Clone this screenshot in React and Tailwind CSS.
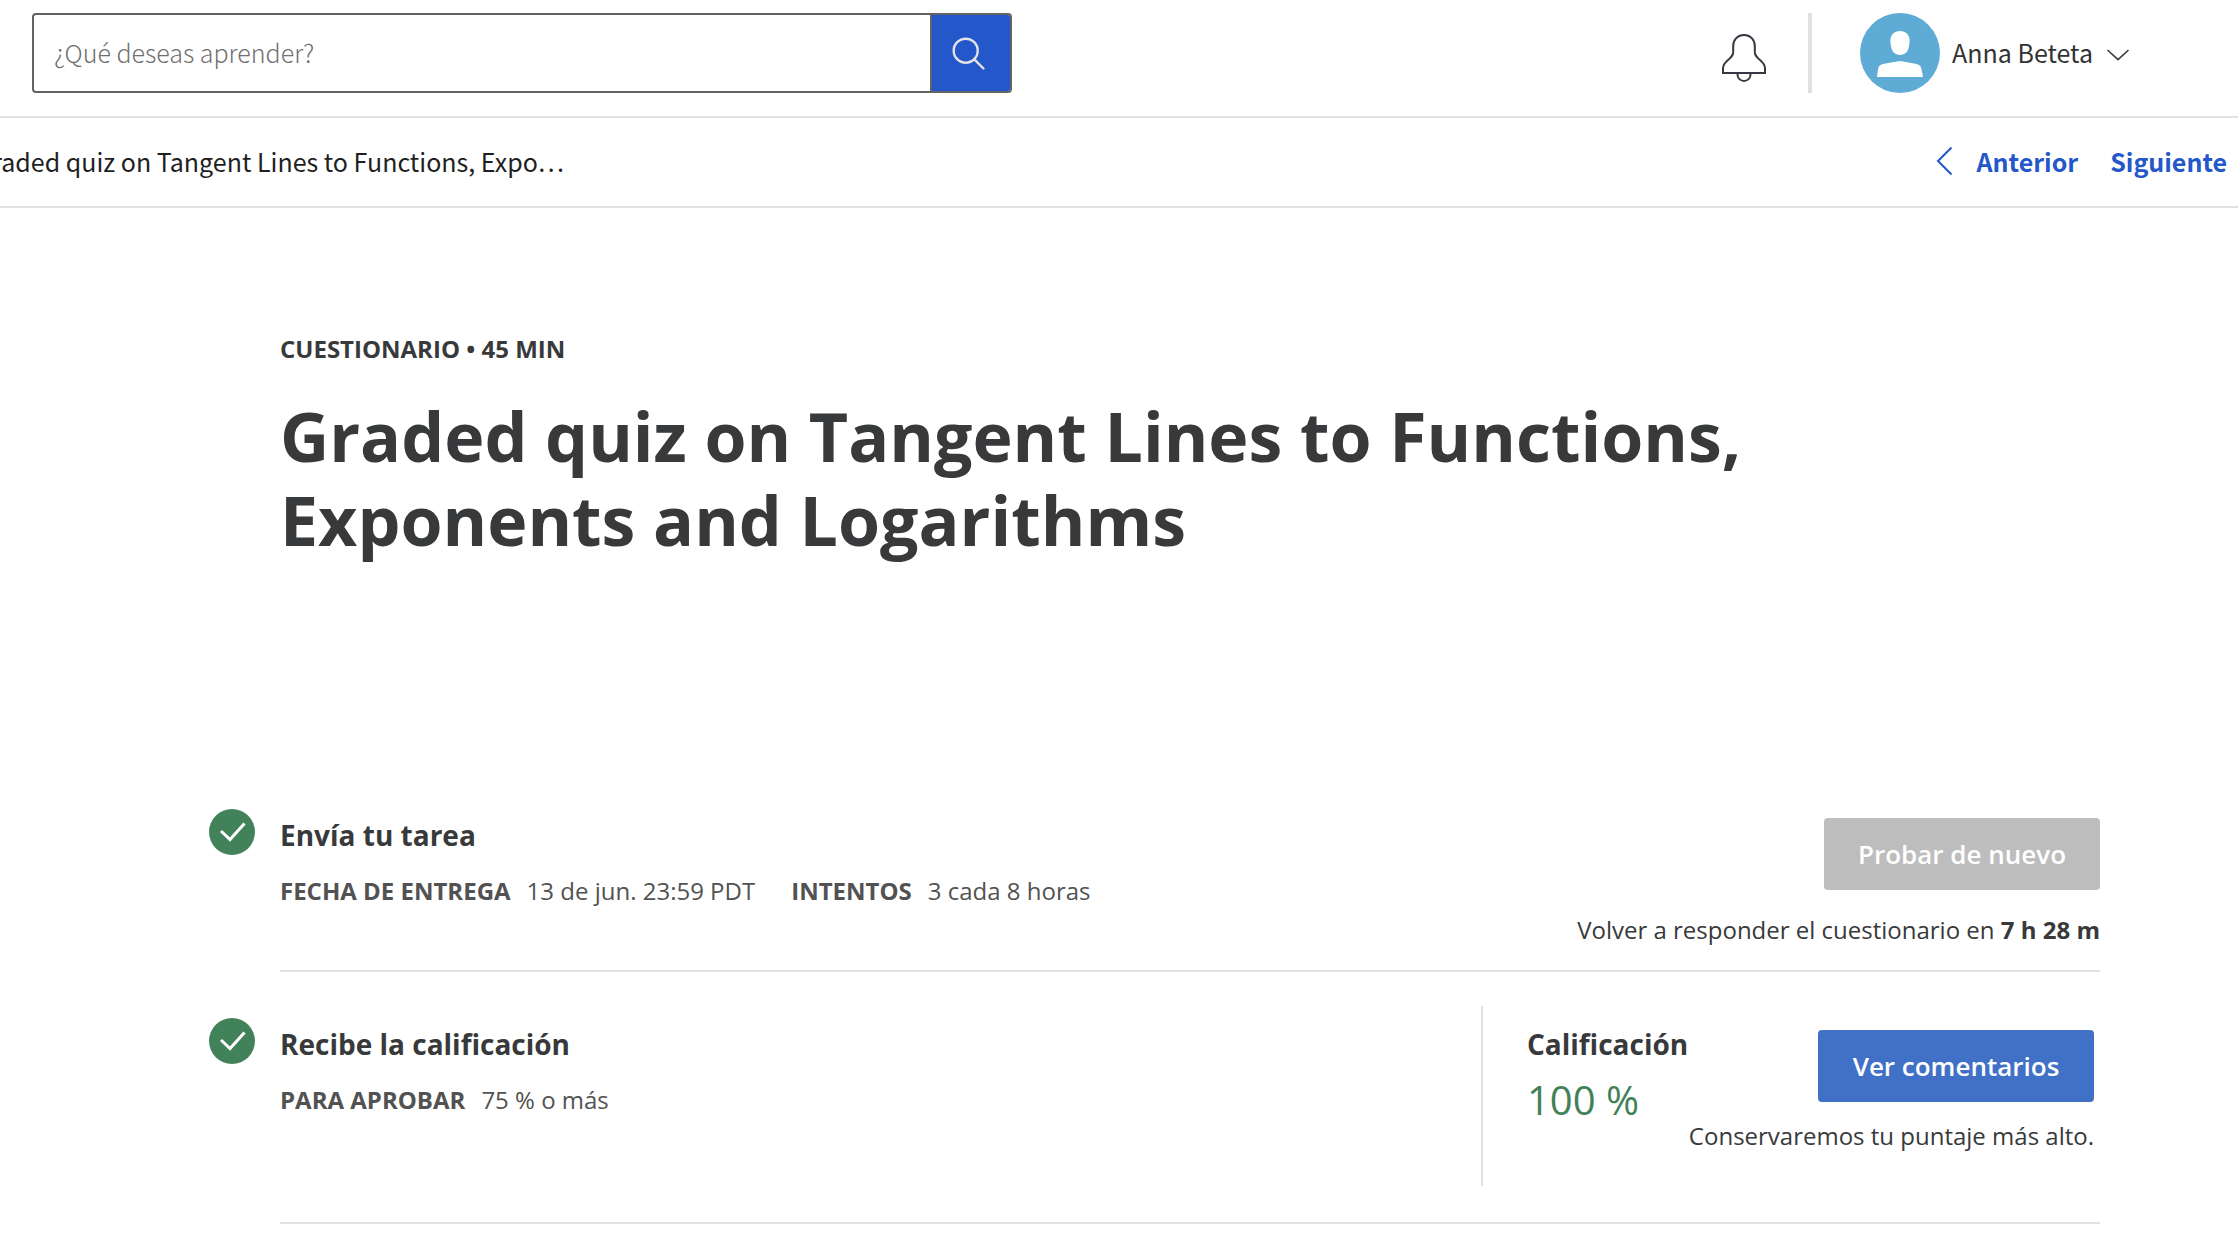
function SearchIcon() {
  return (
    <svg className="size-9" viewBox="0 0 36 36" fill="none" stroke="#e4e4e6" strokeWidth="2.4" strokeLinecap="round">
      <circle cx="14.7" cy="14.7" r="12" />
      <path d="M23.3 23.3L32.5 32.5" />
    </svg>
  );
}

function BellIcon() {
  return (
    <svg className="h-12 w-11" viewBox="0 0 44 48" fill="none" stroke="#373a44" strokeWidth="2">
      <path d="M1 39v-4.500c0-3.200 1.400-5.400 4-7.600 3.900-3.300 6.200-5.100 6.200-9V12C11.200 5.600 15.600 1 22 1s10.800 4.600 10.800 11v5.900c0 3.900 2.300 5.700 6.200 9 2.600 2.200 4 4.400 4 7.600V39Z" />
      <path d="M15.500 39v1.500c0 3.700 2.900 6.500 6.500 6.500s6.500-2.800 6.500-6.500V39" />
    </svg>
  );
}

function Avatar() {
  return (
    <svg className="size-20" viewBox="0 0 80 80">
      <circle cx="40" cy="40" r="40" fill="#5eacd6" />
      <path d="M40 18c5.500 0 9.600 3.700 9.600 9.300 0 2.500-.5 5.700-1.300 8.800C47.200 39.700 44 42 40 42s-7.200-2.300-8.300-5.900c-.8-3.100-1.300-6.300-1.300-8.800 0-5.600 4.100-9.300 9.600-9.300Z" fill="#fff" />
      <path d="M40 48c6 1.200 11.500 1.900 16.500 3 3 .7 4.600 2.300 5 5.200L63 64H17l1-7.800c.4-2.900 2-4.500 5-5.200 5-1.100 11-1.800 17-3Z" fill="#fff" />
    </svg>
  );
}

function CheckBadge() {
  return (
    <svg className="mt-3 size-[46px] shrink-0" viewBox="0 0 46 46">
      <circle cx="23" cy="23" r="23" fill="#42825a" />
      <path d="M12 22l9 8.500L35.500 14.500" fill="none" stroke="#fff" strokeWidth="3" />
    </svg>
  );
}

function Detail({ label, value }) {
  return (
    <div className="flex gap-4">
      <dt className="font-bold">{label}</dt>
      <dd>{value}</dd>
    </div>
  );
}

function Step({ title, details, children }) {
  return (
    <li className="flex gap-[25px]">
      <CheckBadge />
      <div className="flex min-w-0 flex-1 justify-between border-b-2 border-[#e1e1e1]">
        <div className="pt-5">
          <h2 className="text-[28px] leading-9 font-bold">{title}</h2>
          <dl className="mt-5 flex gap-9 text-2xl leading-9 text-[#525252]">
            {details.map((d) => (
              <Detail key={d.label} {...d} />
            ))}
          </dl>
        </div>
        {children}
      </div>
    </li>
  );
}

function Header() {
  return (
    <header className="flex items-center justify-between border-b-2 border-[#e1e1e1] pt-[13px] pr-[108px] pb-[23px] pl-8">
      <form className="flex h-20 w-[980px] overflow-hidden rounded-sm border-2 border-[#636363]" onSubmit={(e) => e.preventDefault()}>
        <input
          type="text"
          aria-label="Buscar"
          placeholder="¿Qué deseas aprender?"
          className="min-w-0 flex-1 px-5 pb-0.5 font-light outline-none placeholder:text-[#6f6f6f]"
        />
        <button type="submit" aria-label="Buscar cursos" className="flex w-20 items-center justify-center border-l-2 border-[#636363] bg-[#2457c9] pt-0.5 pr-1">
          <SearchIcon />
        </button>
      </form>
      <div className="flex items-center">
        <button type="button" aria-label="Notificaciones" className="mr-[42px] pt-2.5">
          <BellIcon />
        </button>
        <div className="mr-12 h-20 w-1 bg-[#e1e1e1]" />
        <button type="button" className="flex items-center text-[#333]">
          <Avatar />
          <span className="ml-3 pb-0.5">Anna Beteta</span>
          <svg className="mt-1 ml-[13px] h-3 w-6" viewBox="0 0 24 12" fill="none" stroke="#373a44" strokeWidth="1.600">
            <path d="M1.500 1L12 10.700L22.500 1" />
          </svg>
        </button>
      </div>
    </header>
  );
}

function ItemNav() {
  return (
    <nav className="flex h-[90px] items-center justify-between border-b-2 border-[#e1e1e1] pr-[11px] pb-0.5">
      <div className="flex w-[564px] justify-end overflow-hidden whitespace-nowrap text-[#1f1f1f]">
        <span>Graded quiz on Tangent Lines to Functions, Expo…</span>
      </div>
      <div className="flex items-center gap-8 font-bold text-[#2457c9]">
        <a href="#anterior" className="flex items-center gap-6">
          <svg className="h-[30px] w-[17px]" viewBox="0 0 17 30" fill="none" stroke="#2457c9" strokeWidth="2">
            <path d="M15.500 1.500L2 15L15.500 28.500" />
          </svg>
          Anterior
        </a>
        <a href="#siguiente">Siguiente</a>
      </div>
    </nav>
  );
}

export default function App() {
  return (
    <div className="min-h-screen bg-white font-['Noto_Sans_CJK_SC',sans-serif] text-[25px] leading-9">
      <Header />
      <ItemNav />
      <main className="pt-[123px] pr-[138px] pl-[209px] font-['Open_Sans',sans-serif] text-[#38393b]">
        <div className="pl-[71px]">
          <p className="text-2xl leading-9 font-bold">CUESTIONARIO • 45 MIN</p>
          <h1 className="mt-[27px] max-w-[1600px] text-[68px] leading-[84px] font-bold">
            Graded quiz on Tangent Lines to Functions, Exponents and Logarithms
          </h1>
        </div>
        <ol className="mt-[235px] flex flex-col gap-[34px]">
          <Step
            title="Envía tu tarea"
            details={[
              { label: "FECHA DE ENTREGA", value: "13 de jun. 23:59 PDT" },
              { label: "INTENTOS", value: "3 cada 8 horas" },
            ]}
          >
            <div className="flex flex-col items-end pt-[21px] pb-6">
              <button type="button" disabled className="h-[72px] w-[276px] rounded bg-[#bdbdbd] text-[26px] font-semibold text-white">
                Probar de nuevo
              </button>
              <p className="mt-6 text-2xl leading-8">
                Volver a responder el cuestionario en <strong>7 h 28 m</strong>
              </p>
            </div>
          </Step>
          <Step title="Recibe la calificación" details={[{ label: "PARA APROBAR", value: "75 % o más" }]}>
            <div className="pb-9">
              <div className="flex h-[180px] w-[619px] justify-between border-l-2 border-[#e1e1e1] pr-1.5 pl-11">
                <div className="pt-5">
                  <h2 className="text-[28px] leading-9 font-bold">Calificación</h2>
                  <p className="mt-3 text-[40px] leading-[52px] text-[#42825a]">100 %</p>
                </div>
                <div className="flex flex-col items-end pt-6">
                  <button type="button" className="h-[72px] w-[276px] rounded bg-[#4071c7] text-[26px] font-semibold text-white">
                    Ver comentarios
                  </button>
                  <p className="mt-4 text-2xl leading-9 whitespace-nowrap">Conservaremos tu puntaje más alto.</p>
                </div>
              </div>
            </div>
          </Step>
        </ol>
      </main>
    </div>
  );
}
